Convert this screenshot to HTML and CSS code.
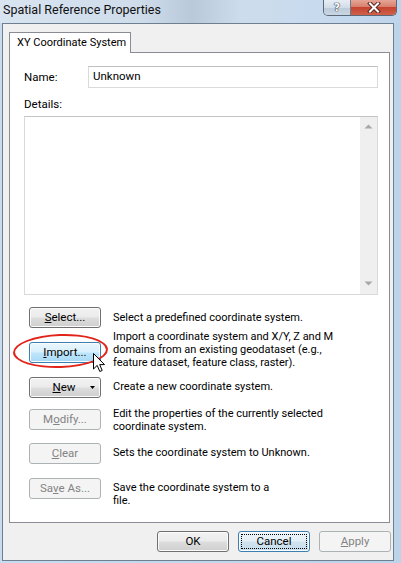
FILE: index.html
```html
<!DOCTYPE html>
<html>
<head>
<meta charset="utf-8">
<link rel="stylesheet" href="styles.css">
</head>
<body>
<div class="window">
  <div class="titlebar">
    <span class="title">Spatial Reference Properties</span>
    <div class="caption-btns">
      <div class="cap help">?</div>
      <div class="cap close">
        <svg width="14" height="11" viewBox="0 0 14 11"><path d="M3 1.5 L11 9.5 M11 1.5 L3 9.5" stroke="#5a2a22" stroke-width="4" stroke-linecap="square"/><path d="M3 1.5 L11 9.5 M11 1.5 L3 9.5" stroke="#fff" stroke-width="2" stroke-linecap="square"/></svg>
      </div>
    </div>
  </div>
  <div class="client">
    <div class="tabs"><div class="tab">XY Coordinate System</div></div>
    <div class="panel">
      <div class="name-row">
        <span class="label">Name:</span>
        <div class="input">Unknown</div>
      </div>
      <div class="details-label">Details:</div>
      <div class="textarea">
        <div class="scrollbar">
          <svg width="9" height="5" viewBox="0 0 9 5"><path d="M0.5 4.5 L4.5 0.5 L8.5 4.5 Z" fill="#a8a8a8"/></svg>
          <svg width="9" height="5" viewBox="0 0 9 5"><path d="M0.5 0.5 L4.5 4.5 L8.5 0.5 Z" fill="#a8a8a8"/></svg>
        </div>
      </div>
      <div class="actions">
        <div class="row r1">
          <div class="btn"><span><u>S</u>elect...</span></div>
          <div class="desc">Select a predefined coordinate system.</div>
        </div>
        <div class="row r2">
          <div class="btn hover"><span><u>I</u>mport...</span></div>
          <div class="desc">Import a coordinate system and X/Y, Z and M<br>domains from an existing geodataset (e.g.,<br>feature dataset, feature class, raster).</div>
        </div>
        <div class="row r3">
          <div class="btn split"><span class="split-label"><u>N</u>ew</span><svg class="split-arrow" width="5" height="3" viewBox="0 0 5 3"><path d="M0 0 L5 0 L2.5 3 Z" fill="#000"/></svg></div>
          <div class="desc">Create a new coordinate system.</div>
        </div>
        <div class="row r4">
          <div class="btn disabled"><span>M<u>o</u>dify...</span></div>
          <div class="desc">Edit the properties of the currently selected<br>coordinate system.</div>
        </div>
        <div class="row r5">
          <div class="btn disabled"><span><u>C</u>lear</span></div>
          <div class="desc">Sets the coordinate system to Unknown.</div>
        </div>
        <div class="row r6">
          <div class="btn disabled"><span>Sa<u>v</u>e As...</span></div>
          <div class="desc">Save the coordinate system to a<br>file.</div>
        </div>
      </div>
    </div>
    <div class="footer">
      <div class="btn"><span>OK</span></div>
      <div class="btn focus"><span>Cancel</span></div>
      <div class="btn disabled"><span><u>A</u>pply</span></div>
    </div>
  </div>
  <div class="ellipse"></div>
  <svg class="cursor" width="13" height="20" viewBox="0 0 13 20"><path d="M0.5 0.5 L0.5 16 L4.2 12.4 L6.8 18.5 L9.2 17.5 L6.7 11.6 L11.5 11.6 Z" fill="#fff" stroke="#000" stroke-width="1" stroke-linejoin="miter"/></svg>
</div>
</body>
</html>
```
FILE: styles.css
```css
* { box-sizing: border-box; }
html, body { margin: 0; padding: 0; }
body {
  width: 401px;
  height: 563px;
  overflow: hidden;
  font-family: Roboto, "Open Sans", sans-serif;
  font-size: 11px;
  color: #000;
  background: #bcd3ea;
}
.window {
  position: relative;
  width: 401px;
  height: 563px;
  display: flex;
  flex-direction: column;
  background: linear-gradient(to right, #c9dcef 0, #bdd3ea 100%);
}
.titlebar {
  height: 23px;
  flex: none;
  display: flex;
  justify-content: space-between;
  align-items: flex-start;
  padding-left: 3px;
  background: linear-gradient(to right, #d8e4f0 0, #cfdcea 35%, #b9c9da 48%, #cddceb 60%, #c7daee 80%, #bed4ec 100%);
}
.title {
  font-size: 12.5px;
  line-height: 20px;
  color: #111;
  white-space: nowrap;
}
.caption-btns {
  display: flex;
  margin-right: 4px;
  height: 16px;
  border: 1px solid #5b6878;
  border-top: none;
  border-radius: 0 0 5px 5px;
  overflow: hidden;
}
.cap {
  height: 15px;
  display: flex;
  align-items: center;
  justify-content: center;
}
.help {
  width: 27px;
  border-right: 1px solid #6c7a8a;
  background: linear-gradient(#e7edf4 0, #d3dde8 50%, #bccad9 51%, #c9d6e3 100%);
  color: #fff;
  font-family: "DejaVu Sans", sans-serif;
  font-weight: bold;
  font-size: 11px;
  text-shadow: 0 0 1px #2e3b4b, 0 0 1px #2e3b4b, 0 0 1px #2e3b4b;
}
.close {
  width: 45px;
  background: linear-gradient(#e6a597 0, #d9806f 45%, #c5432f 50%, #d0614d 100%);
}
.client {
  margin-left: 2px;
  width: 392px;
  height: 538px;
  border: 1px solid #6f7f92;
  background: #f0f0f0;
  padding: 8px 0 0 6px;
}
.tabs {
  display: flex;
  height: 20px;
}
.tab {
  position: relative;
  z-index: 1;
  width: 122px;
  height: 21px;
  border: 1px solid #898c95;
  border-bottom: none;
  background: #fff;
  padding-left: 7px;
  line-height: 19px;
  font-size: 11px;
  white-space: nowrap;
}
.panel {
  width: 381px;
  height: 471px;
  border: 1px solid #898c95;
  background: #fff;
  padding: 0 11px 0 14px;
}
.name-row {
  display: flex;
  align-items: center;
  margin-top: 13px;
  height: 22px;
}
.label {
  width: 64px;
  flex: none;
  font-size: 11.5px;
}
.input {
  flex: 1;
  height: 22px;
  border: 1px solid #dadada;
  border-top-color: #c0c0c0;
  padding-left: 4px;
  line-height: 19px;
  font-size: 11.5px;
}
.details-label {
  margin-top: 9px;
  line-height: 14px;
  font-size: 11.5px;
}
.textarea {
  margin-top: 5px;
  height: 179px;
  border: 1px solid #d9d9d9;
  border-top-color: #c4c4c4;
  display: flex;
  justify-content: flex-end;
}
.scrollbar {
  width: 17px;
  background: #efefef;
  display: flex;
  flex-direction: column;
  justify-content: space-between;
  align-items: center;
  padding: 7px 0 8px;
}
.actions {
  margin-top: 12px;
  margin-left: 5px;
  display: flex;
  flex-direction: column;
}
.row {
  display: flex;
  align-items: flex-start;
  gap: 12px;
}
.desc {
  line-height: 13px;
  white-space: nowrap;
}
.r1 .desc { margin-top: 4px; }
.r2 { margin-top: 2px; }
.r2 .btn { margin-top: 12px; }
.r3 { margin-top: 8px; }
.r3 .desc { margin-top: 3px; }
.r4 { margin-top: 9px; }
.r4 .btn { margin-top: 2px; }
.r5 { margin-top: 10px; }
.r5 .desc { margin-top: 3px; }
.r6 { margin-top: 14px; }
.r6 .desc { margin-top: 3px; }

.btn {
  position: relative;
  flex: none;
  width: 72px;
  height: 21px;
  border: 1px solid #707070;
  border-radius: 3px;
  background: linear-gradient(#f2f2f2 0, #ebebeb 48%, #dddddd 52%, #cfcfcf 100%);
  box-shadow: inset 0 0 0 1px #fbfbfb;
  display: flex;
  align-items: center;
  justify-content: center;
  line-height: 13px;
  font-size: 11.5px;
}
.btn.hover {
  border-color: #3c7fb1;
  background: linear-gradient(#eaf6fd 0, #d9f0fc 48%, #bee6fd 52%, #a7d9f5 100%);
}
.btn.disabled {
  border-color: #adb2b5;
  background: #f4f4f4;
  box-shadow: none;
  color: #838383;
}
.btn.focus {
  border-color: #3c7fb1;
  background: linear-gradient(#eef6fb 0, #e3eef6 48%, #d1e3ef 52%, #c6dcec 100%);
}
.btn.focus::after {
  content: "";
  position: absolute;
  inset: 2px;
  border: 1px dotted #000;
}
.btn.split {
  display: grid;
  grid-template-columns: 1fr auto 1fr;
  align-items: center;
}
.split-label { grid-column: 2; margin-left: -2px; }
.split-arrow { grid-column: 3; justify-self: end; margin-right: 5px; }
.footer {
  width: 382px;
  margin-top: 8px;
  display: flex;
  justify-content: flex-end;
  gap: 9px;
}
.ellipse {
  position: absolute;
  left: 13px;
  top: 334px;
  width: 95px;
  height: 34px;
  border: 2px solid #e2231a;
  border-radius: 50%;
  transform: rotate(-2deg);
}
.cursor {
  position: absolute;
  left: 93px;
  top: 353px;
}
```
